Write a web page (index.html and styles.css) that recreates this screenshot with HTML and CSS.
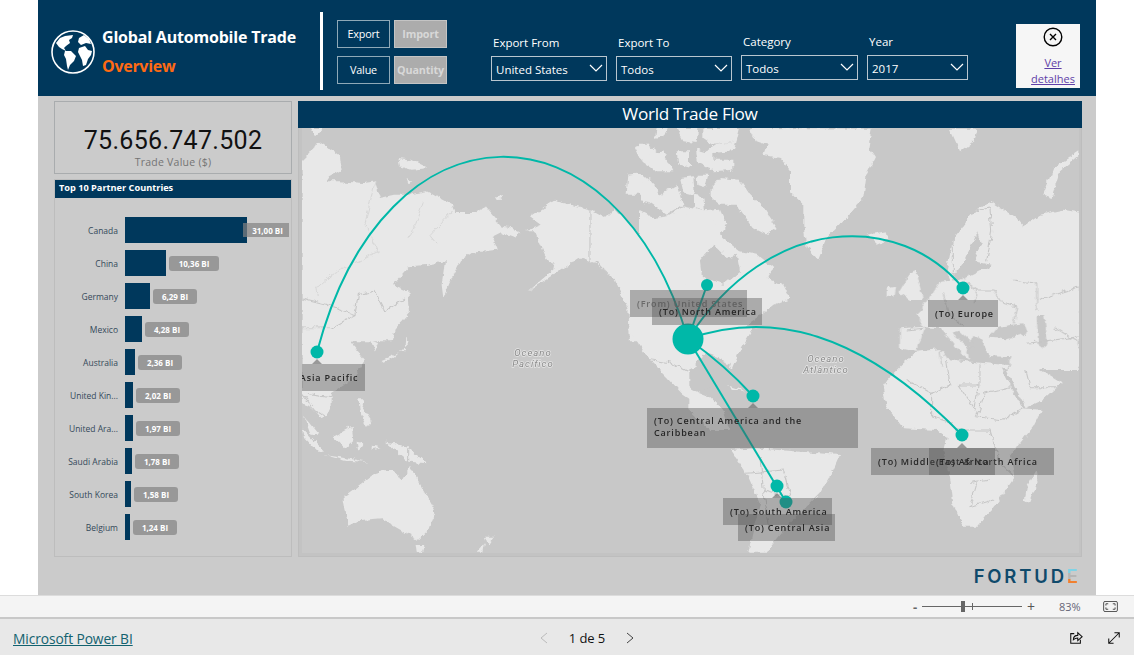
FILE: index.html
```html
<!DOCTYPE html>
<html lang="en">
<head>
<meta charset="utf-8">
<title>Global Automobile Trade</title>
<link rel="stylesheet" href="styles.css">
</head>
<body>
<main class="stage">
  <div class="report">
    <header class="header">
      <div class="brand">
        <svg class="globe" viewBox="0 0 44 44">
          <circle cx="22" cy="22" r="21" class="globe-ring"/>
          <path class="globe-land" d="M5 13 L9 8 L14 6 L22 5 L21 8 L18 10 L19 13 L15 16 L13 18 L15 21 L11 19 L8 17 Z"/>
          <path class="globe-land" d="M14 21 L20 21 L25 26 L23 31 L19 35 L17 40 L16 36 L15 29 L13 25 Z"/>
          <path class="globe-land" d="M28 8 L33 5 L38 9 L40 14 L35 13 L30 15 L27 12 Z"/>
          <path class="globe-land" d="M28 18 L34 16 L37 20 L41 21 L40 25 L37 29 L35 35 L32 36 L31 30 L29 26 L27 22 Z"/>
        </svg>
        <div class="titles">
          <div class="title">Global Automobile Trade</div>
          <div class="subtitle">Overview</div>
        </div>
      </div>
      <div class="divider"></div>
      <div class="toggles">
        <button class="toggle">Export</button>
        <button class="toggle off">Import</button>
        <button class="toggle">Value</button>
        <button class="toggle off">Quantity</button>
      </div>
      <div class="slicers">
        <div class="slicer"><div class="slicer-label">Export From</div><div class="dropdown"><span>United States</span><svg class="chev" viewBox="0 0 14 8"><path d="M1 1 L7 7 L13 1"/></svg></div></div>
        <div class="slicer"><div class="slicer-label">Export To</div><div class="dropdown"><span>Todos</span><svg class="chev" viewBox="0 0 14 8"><path d="M1 1 L7 7 L13 1"/></svg></div></div>
        <div class="slicer up"><div class="slicer-label">Category</div><div class="dropdown"><span>Todos</span><svg class="chev" viewBox="0 0 14 8"><path d="M1 1 L7 7 L13 1"/></svg></div></div>
        <div class="slicer up"><div class="slicer-label">Year</div><div class="dropdown"><span>2017</span><svg class="chev" viewBox="0 0 14 8"><path d="M1 1 L7 7 L13 1"/></svg></div></div>
      </div>
      <div class="details">
        <svg class="close" viewBox="0 0 20 20"><circle cx="10" cy="10" r="8.8"/><path d="M7 7 L13 13 M13 7 L7 13"/></svg>
        <a class="details-link" href="#">Ver<br>detalhes</a>
      </div>
    </header>

    <div class="content">
      <aside class="left">
        <section class="kpi">
          <div class="kpi-value">75.656.747.502</div>
          <div class="kpi-label">Trade Value ($)</div>
        </section>
        <section class="partners">
          <h2 class="partners-title">Top 10 Partner Countries</h2>
          <div class="rows">
            <div class="row"><span class="country">Canada</span><span class="bar" style="width:122px"></span><span class="val over">31,00 BI</span></div>
            <div class="row"><span class="country">China</span><span class="bar" style="width:41px"></span><span class="val wide">10,36 BI</span></div>
            <div class="row"><span class="country">Germany</span><span class="bar" style="width:25px"></span><span class="val">6,29 BI</span></div>
            <div class="row"><span class="country">Mexico</span><span class="bar" style="width:17px"></span><span class="val">4,28 BI</span></div>
            <div class="row"><span class="country">Australia</span><span class="bar" style="width:10px"></span><span class="val">2,36 BI</span></div>
            <div class="row"><span class="country">United Kin...</span><span class="bar" style="width:8px"></span><span class="val">2,02 BI</span></div>
            <div class="row"><span class="country">United Ara...</span><span class="bar" style="width:8px"></span><span class="val">1,97 BI</span></div>
            <div class="row"><span class="country">Saudi Arabia</span><span class="bar" style="width:7px"></span><span class="val">1,78 BI</span></div>
            <div class="row"><span class="country">South Korea</span><span class="bar" style="width:6px"></span><span class="val">1,58 BI</span></div>
            <div class="row"><span class="country">Belgium</span><span class="bar" style="width:5px"></span><span class="val">1,24 BI</span></div>
          </div>
        </section>
      </aside>

      <section class="flow">
        <h2 class="flow-title">World Trade Flow</h2>
        <div class="map-frame">
          <div class="map">
            <svg class="map-svg" viewBox="302 128 777 425">
              <defs>
                <filter id="rough" x="0" y="0" width="100%" height="100%" color-interpolation-filters="sRGB">
                  <feTurbulence type="fractalNoise" baseFrequency="0.14" numOctaves="3" seed="4" result="n"/>
                  <feDisplacementMap in="SourceGraphic" in2="n" scale="6" xChannelSelector="R" yChannelSelector="G"/>
                </filter>
              </defs>
              <g filter="url(#rough)">
              <g transform="translate(295 98) scale(.3333)">
                <path class="land" d="M20,190 L45,165 L70,130 L100,150 L135,175 L140,215 L105,235 L95,250 L130,250 L205,255 L240,250 L255,300 L300,290 L340,290 L395,280 L470,320 L480,345 L540,345 L570,325 L620,385 L665,395 L675,400 L660,420 L620,405 L590,420 L605,455 L530,465 L495,490 L470,540 L445,600 L440,560 L450,490 L400,500 L345,505 L295,560 L340,580 L345,640 L300,690 L290,730 L20,730 Z"/>
                <path class="land" d="M45,90 L85,90 L60,115 Z M310,180 L350,185 L400,210 L350,215 L315,205 Z M335,240 L352,250 L340,255 Z M600,298 L625,295 L622,305 L605,306 Z"/>
                <path class="land" d="M705,355 L780,305 L885,335 L930,360 L960,330 L1020,395 L1090,435 L1200,430 L1200,730 L1005,730 L1000,630 L960,550 L910,500 L850,480 L790,520 L700,580 L780,510 L750,470 L720,400 L695,400 L740,380 Z"/>
                <path class="land" d="M1000,230 L1040,225 L1080,260 L1040,290 L995,290 Z M1020,150 L1060,140 L1120,185 L1080,215 L1040,190 Z"/>
                <path class="border" d="M885,335 L885,490 L910,495 L960,550"/>
                <path class="border" d="M20,600 L100,620 L180,650 L190,590 L240,580 L270,640 L330,600"/>
                <path class="border" d="M20,690 L110,690 L180,650"/>
                <path class="thin" d="M240,250 L210,380 L250,460 L190,490 L110,530 L65,570 L70,600 M385,310 L345,420 M470,340 L405,410 L430,440"/>
              </g>
              <g transform="translate(640 128) scale(.3333)">
                <path class="land" d="M50,0 L80,0 L70,25 L45,30 Z M110,0 L175,0 L170,45 L130,40 Z M190,0 L300,0 L290,40 L220,50 L190,30 Z"/>
                <path class="land" d="M0,50 L30,50 L20,90 L0,90 Z M20,80 L70,70 L100,130 L40,130 Z M110,70 L150,70 L150,120 L115,110 Z"/>
                <path class="land" d="M165,60 L200,70 L230,50 L290,40 L280,70 L220,75 L220,95 L280,95 L280,125 L220,130 L190,110 L170,100 Z"/>
                <path class="land" d="M215,180 L240,150 L300,155 L330,200 L370,240 L410,300 L380,320 L340,300 L290,230 L240,230 L215,210 Z"/>
                <path class="land" d="M120,150 L160,145 L165,205 L130,195 Z M170,140 L205,140 L195,178 L172,170 Z M165,200 L190,205 L195,250 L165,240 Z"/>
                <path class="land" d="M0,175 L30,150 L60,200 L110,170 L130,230 L80,260 L30,225 L0,220 Z"/>
                <path class="land" d="M0,250 L40,270 L80,265 L130,235 L195,250 L240,245 L260,290 L235,330 L240,360 L0,360 Z"/>
              </g>
              <g transform="translate(690 98) scale(.3333)">
                <path class="land" d="M180,90 L545,92 L535,150 L555,180 L530,230 L520,300 L470,360 L410,420 L385,485 L350,450 L340,380 L340,320 L300,280 L300,220 L270,180 L220,170 L230,140 L200,130 Z"/>
                <path class="land" d="M530,410 L590,400 L595,425 L560,440 Z"/>
                <path class="land" d="M-10,340 L60,350 L100,420 L150,460 L200,470 L250,510 L230,540 L280,560 L300,600 L250,620 L215,650 L170,680 L130,730 L-10,730 Z"/>
                <path class="sea" d="M30,490 L70,440 L110,480 L140,470 L150,520 L100,560 L60,550 L35,530 Z"/>
                <path class="land" d="M780,92 L860,92 L850,130 L810,160 Z"/>
                <path class="land" d="M1060,290 L1090,210 L1165,160 L1165,175 L1110,220 L1085,300 Z"/>
                <path class="land" d="M770,520 L790,420 L850,340 L900,310 L980,360 L1000,385 L1050,350 L1120,335 L1175,345 L1175,560 L880,560 L790,570 Z"/>
                <path class="sea" d="M825,485 L862,400 L872,440 L850,490 L905,500 L880,530 L830,545 L790,565 L790,530 Z"/>
                <path class="border" d="M790,530 L790,420 L850,340 L900,330 M900,330 L905,400 L890,490"/>
              </g>
              <g transform="translate(295 330) scale(.3333)">
                <path class="land" d="M1000,-5 L1060,85 L1120,145 L1160,190 L1205,220 L1205,-5 Z"/>
                <path class="land" d="M20,-5 L235,-5 L170,40 L210,90 L170,150 L110,190 L110,240 L80,265 L50,230 L20,220 Z"/>
                <path class="land" d="M30,260 L70,310 L50,315 Z M20,295 L90,365 L70,365 L20,310 Z M115,320 L170,290 L175,330 L150,355 Z M90,375 L220,395 L150,392 Z M230,350 L260,355 L230,360 Z M185,335 L205,340 L190,365 Z"/>
                <path class="land" d="M225,30 L250,40 L240,65 Z M260,90 L330,60 L335,20 L342,40 L300,80 L265,95 Z"/>
                <path class="land" d="M190,205 L205,205 L200,225 L230,270 L215,290 L195,250 Z"/>
                <path class="land" d="M270,335 L330,345 L395,400 L340,395 L300,360 Z"/>
                <path class="land" d="M145,500 L200,460 L240,430 L270,420 L300,420 L320,455 L345,410 L380,470 L420,540 L400,600 L370,630 L300,590 L260,565 L200,570 L160,590 Z"/>
                <path class="land" d="M365,645 L388,645 L380,668 L368,668 Z M570,620 L600,620 L580,650 Z M545,668 L570,640 L565,668 Z"/>
                <path class="border" d="M20,190 L60,240 L90,260 M1060,88 L1130,100 L1190,130 M30,190 L110,200 M338,355 L338,395"/>
              </g>
              <g transform="translate(690 330) scale(.3333)">
                <path class="land" d="M-5,-5 L190,-5 L150,60 L125,120 L105,90 L50,70 L-5,110 Z"/>
                <path class="sea" d="M-5,115 L50,100 L90,135 L60,170 L15,190 L-5,170 Z"/>
                <path class="land" d="M-5,175 L60,200 L100,240 L120,300 L60,300 L-5,240 Z M110,165 L170,185 L130,178 Z"/>
                <path class="land" d="M120,360 L200,355 L450,375 L430,420 L390,490 L320,560 L280,600 L240,650 L230,668 L175,668 L190,600 L210,520 L170,430 Z"/>
                <path class="land" d="M578,175 L600,140 L640,100 L690,60 L760,55 L770,85 L870,95 L930,110 L960,170 L1000,235 L1055,240 L1030,290 L990,340 L960,380 L975,440 L920,520 L860,590 L820,590 L790,520 L780,440 L760,360 L770,320 L740,300 L640,295 L590,230 Z"/>
                <path class="land" d="M945,110 L1000,90 L1115,160 L1060,210 L1010,232 L975,170 Z"/>
                <path class="land" d="M1010,470 L1040,420 L1045,450 L1020,520 L1005,510 Z"/>
                <path class="border" d="M770,90 L780,165 L725,190 L650,150 M870,95 L870,165 L805,165 L855,240 L865,160 M960,170 L880,190 L860,260 L940,270 L1000,235 M725,190 L725,260 L790,280 M790,300 L900,300 L930,400 L970,440 M840,460 L900,450 M860,460 L840,530 L910,510 M1000,90 L1020,170 L1100,170 M170,430 L280,420 L300,500 L220,480 L210,380 M220,480 L240,600"/>
              </g>
              <g transform="translate(880 250) scale(.3333)">
                <path class="land" d="M180,95 L240,90 L300,60 L600,60 L600,360 L385,360 L110,305 L60,295 L60,235 L130,230 L110,190 L130,170 Z"/>
                <path class="land" d="M55,130 L90,70 L105,60 L130,150 L90,150 Z M20,115 L45,110 L40,140 L20,145 Z"/>
                <path class="sea" d="M110,305 L180,297 L205,328 L300,338 L385,345 L395,322 L330,318 L305,270 L285,255 L262,300 L268,330 L240,305 L205,262 L180,235 L135,232 L122,270 Z"/>
                <path class="sea" d="M215,250 L240,245 L290,290 L270,295 Z"/>
                <path class="sea" d="M355,230 L430,220 L440,250 L380,265 L330,260 Z"/>
                <path class="sea" d="M470,200 L495,195 L505,270 L495,295 L475,280 Z"/>
                <path class="border" d="M80,240 L130,235 M190,130 L210,200 L250,225 M250,90 L290,120 L340,120 M340,120 L365,160 L410,170 L400,220 M290,120 L280,160 M400,90 L470,100 L470,180 M470,150 L600,110 M520,230 L600,280 M440,280 L600,260 M180,300 L185,350 M390,340 L380,360"/>
              </g>
              </g>
              <text class="ocean" x="533" y="356">Oceano</text>
              <text class="ocean" x="533" y="367">Pacífico</text>
              <text class="ocean" x="826" y="362">Oceano</text>
              <text class="ocean" x="826" y="373">Atlântico</text>

              <path class="arc" d="M688,339 C615,94 385,94 317,352"/>
              <path class="arc" d="M688,339 C770,212 900,212 963,288"/>
              <path class="arc" d="M688,339 C770,310 860,330 962,435"/>
              <path class="arc" d="M688,339 Q725,365 753,396"/>
              <path class="arc" d="M688,339 L786,502"/>
              <path class="arc" d="M688,339 L707,285"/>
              <circle class="dot" cx="688" cy="339" r="15.5"/>
              <circle class="dot" cx="707" cy="285" r="6"/>
              <circle class="dot" cx="963" cy="288" r="6.5"/>
              <circle class="dot" cx="317" cy="352" r="6.5"/>
              <circle class="dot" cx="753" cy="396" r="6.5"/>
              <circle class="dot" cx="962" cy="435" r="6.5"/>
              <circle class="dot" cx="786" cy="502" r="6.5"/>
              <circle class="dot" cx="777" cy="486" r="6.5"/>
              <path class="tip" d="M958,300 L963,295 L968,300 Z M312,364 L317,359 L322,364 Z M748,408 L753,403 L758,408 Z M957,448 L962,443 L967,448 Z M772,498 L777,493 L782,498 Z"/>
            </svg>
            <div class="tag tag-from">(From) United States</div>
            <div class="tag tag-na">(To) North America</div>
            <div class="tag tag-eu">(To) Europe</div>
            <div class="tag tag-ap">(To) Asia Pacific</div>
            <div class="tag tag-ca">(To) Central America and the Caribbean</div>
            <div class="tag tag-me">(To) Middle East &amp; North Africa</div>
            <div class="tag tag-af">(To) Africa</div>
            <div class="tag tag-sa">(To) South America</div>
            <div class="tag tag-cas">(To) Central Asia</div>
          </div>
        </div>
      </section>
    </div>

    <div class="logo-row"><div class="logo">FORTUD<span class="logo-e">E</span></div></div>
  </div>
</main>

<div class="zoombar">
  <span class="zoom-minus">-</span>
  <div class="slider"><span class="tick"></span><span class="thumb"></span></div>
  <span class="zoom-plus">+</span>
  <span class="zoom-val">83%</span>
  <svg class="fit" viewBox="0 0 16 12"><rect x="0.5" y="0.5" width="15" height="11" rx="1.5"/><path d="M3 5 V3 H5.5 M13 5 V3 H10.5 M3 7 V9 H5.5 M13 7 V9 H10.5"/></svg>
</div>

<footer class="footer">
  <a class="pbi" href="#">Microsoft Power BI</a>
  <nav class="pager">
    <svg class="pg dim" viewBox="0 0 8 12"><path d="M7 1 L1 6 L7 11"/></svg>
    <span class="pg-text">1 de 5</span>
    <svg class="pg" viewBox="0 0 8 12"><path d="M1 1 L7 6 L1 11"/></svg>
  </nav>
  <div class="actions">
    <svg class="act" viewBox="0 0 16 16"><path d="M6 3 H2 V14 H13 V10"/><path d="M5 10 C5 7 7 5 10 5 V2 L15 6.5 L10 11 V8 C8 8 6.5 8.5 5 10 Z"/></svg>
    <svg class="act" viewBox="0 0 16 16"><path d="M2 14 L14 2 M8.5 2 H14 V7.5 M2 8.5 V14 H7.5"/></svg>
  </div>
</footer>
</body>
</html>
```
FILE: styles.css
```css
* { box-sizing: border-box; }
html, body { margin: 0; height: 100%; }
body {
  width: 1134px;
  height: 655px;
  overflow: hidden;
  background: #fff;
  font-family: "Open Sans", "Liberation Sans", sans-serif;
  display: flex;
  flex-direction: column;
}
.stage { height: 595px; padding-left: 38px; flex: none; }
.report { width: 1058px; height: 595px; background: #cbcbcb; display: flex; flex-direction: column; }

/* header */
.header { height: 96px; flex: none; background: #00385c; display: flex; align-items: flex-start; }
.brand { width: 282px; padding-left: 13px; padding-top: 30px; display: flex; gap: 7px; flex: none; }
.globe { width: 44px; height: 44px; flex: none; }
.globe-ring { fill: none; stroke: #fff; stroke-width: 1.6; }
.globe-land { fill: #fff; }
.titles { display: flex; flex-direction: column; margin-top: -5px; }
.title { color: #fff; font-size: 16px; font-weight: 700; line-height: 24px; letter-spacing: -.2px; white-space: nowrap; }
.subtitle { color: #ff6a13; font-size: 16px; font-weight: 700; line-height: 34px; letter-spacing: -.3px; }
.divider { width: 3px; height: 78px; margin-top: 12px; background: #fff; flex: none; }
.toggles { margin: 20px 0 0 14px; display: grid; grid-template-columns: 53px 53px; grid-template-rows: 28px 28px; column-gap: 4px; row-gap: 8px; flex: none; }
.toggle { padding: 0 0 2px; border: 1px solid #8fa9b8; background: #00385c; color: #fff; font: 500 10.8px "Open Sans", sans-serif; letter-spacing: -.15px; }
.toggle.off { background: #acacac; color: #d8d8d8; border-color: #c4c4c4; font-weight: 700; }
.slicers { margin: 34px 0 0 44px; display: grid; grid-template-columns: 116px 116px 117px 101px; column-gap: 9px; flex: none; }
.slicer-label { height: 22px; padding-left: 2px; color: #fff; font-size: 11.5px; line-height: 17px; white-space: nowrap; }
.slicer.up { margin-top: -1px; }
.dropdown { height: 25px; border: 1px solid #b9c6cf; display: flex; align-items: center; justify-content: space-between; padding: 2px 3px 0 4px; color: #fff; font-size: 11.5px; white-space: nowrap; }
.chev { width: 14px; height: 8px; fill: none; stroke: #fff; stroke-width: 1.2; margin-top: -3px; }
.details { margin: 24px 16px 0 auto; width: 64px; height: 64px; background: #f6f6f6; display: flex; flex-direction: column; align-items: center; padding: 3px 0 0 10px; }
.close { width: 20px; height: 20px; fill: none; stroke: #000; stroke-width: 1.4; }
.details-link { margin-top: 8px; color: #5f3fa8; font-size: 11px; line-height: 16px; text-align: center; }

/* body */
.content { height: 461px; flex: none; padding: 5px 14px 0 16px; display: flex; gap: 6px; }
.left { width: 238px; display: flex; flex-direction: column; gap: 5px; flex: none; }
.kpi { height: 73px; border: 1px solid #a9acae; text-align: center; padding-top: 24px; flex: none; }
.kpi-value { font-family: "Roboto", sans-serif; font-size: 25px; line-height: 30px; letter-spacing: .3px; color: #111; }
.kpi-label { font-size: 10.5px; line-height: 14px; color: #747474; letter-spacing: .25px; margin-top: -1px; }
.partners { height: 378px; border: 1px solid #bdbdbd; flex: none; }
.partners-title { margin: 0; height: 18px; background: #00385c; color: #fff; font-size: 9.2px; font-weight: 700; line-height: 16px; padding-left: 4px; }
.rows { padding-top: 19px; display: flex; flex-direction: column; gap: 7px; }
.row { height: 26px; display: flex; align-items: center; }
.country { width: 63px; margin-right: 7px; text-align: right; color: #34495a; font-size: 8.5px; white-space: nowrap; flex: none; }
.bar { height: 26px; background: #00385c; flex: none; }
.val { margin-left: 3px; width: 44px; height: 15px; border-radius: 3px; background: #989898; color: #fff; font-size: 8px; font-weight: 700; line-height: 15px; text-align: center; white-space: nowrap; flex: none; }
.val.wide { width: 50px; }
.val.over { margin-left: -4px; width: 46px; height: 14px; background: rgba(130,130,130,.7); border-radius: 0; padding-left: 3px; }

.flow { width: 784px; height: 456px; display: flex; flex-direction: column; flex: none; }
.flow-title { margin: 0; height: 27px; background: #00385c; color: #fff; font-size: 17.2px; font-weight: 400; line-height: 25px; text-align: center; letter-spacing: -.3px; flex: none; }
.map-frame { height: 429px; padding: 0 3px 2px 4px; border: 1px solid #bdbdbd; border-top: 0; background: #c3c3c3; flex: none; }
.map { position: relative; width: 777px; height: 425px; overflow: hidden; background: #c8c8c8; margin-left: -1px; }
.map-svg { display: block; width: 777px; height: 425px; }
.land { fill: #e8e8e8; }
.sea { fill: #c8c8c8; }
.border { fill: none; stroke: #c6c6c6; stroke-width: 3.2; stroke-linejoin: round; }
.thin { fill: none; stroke: #cfcfcf; stroke-width: 2; stroke-linejoin: round; }
.ocean { font: italic 9.5px "Roboto", sans-serif; letter-spacing: 1px; fill: #8a8a8a; stroke: #e6e6e6; stroke-width: 1.5px; paint-order: stroke; text-anchor: middle; }
.arc { fill: none; stroke: #00b8a8; stroke-width: 2; }
.dot { fill: #00b8a8; }
.tip { fill: rgba(100,100,100,.6); }

.tag { position: absolute; height: 27px; padding: 0 7px; background: rgba(80,80,80,.4); color: #262626; font-size: 9px; font-weight: 600; line-height: 27px; letter-spacing: .85px; white-space: nowrap; }
.tag-from { left: 328px; top: 162px; width: 117px; color: #6b6b6b; }
.tag-na { left: 350px; top: 170px; width: 110px; }
.tag-eu { left: 626px; top: 172px; width: 70px; }
.tag-ap { left: -32px; top: 236px; width: 95px; }
.tag-ca { left: 345px; top: 280px; width: 211px; height: 40px; line-height: 12px; padding-top: 7px; white-space: normal; }
.tag-me { left: 569px; top: 320px; width: 183px; }
.tag-af { left: 627px; top: 320px; width: 66px; }
.tag-sa { left: 421px; top: 370px; width: 109px; }
.tag-cas { left: 436px; top: 386px; width: 97px; }

/* logo */
.logo-row { flex: 1; display: flex; justify-content: flex-end; padding: 10px 18px 0 0; }
.logo { height: 18px; color: #0f4a6b; font-size: 18.5px; font-weight: 600; letter-spacing: 2.8px; line-height: 18px; font-family: "Inter", sans-serif; }
.logo-e { background: linear-gradient(#7fd3e6 0 36%, #b5b5b5 36% 62%, #f08030 62%); -webkit-background-clip: text; background-clip: text; color: transparent; letter-spacing: 0; }

/* bars */
.zoombar { height: 24px; flex: none; background: #f4f4f4; border-top: 1px solid #dcdcdc; border-bottom: 2px solid #c8c8c8; display: flex; align-items: center; color: #666; }
.zoom-minus { margin-left: 913px; width: 9px; font-size: 13px; font-weight: 700; line-height: 14px; }
.slider { position: relative; width: 100px; height: 1px; background: #666; flex: none; }
.tick { position: absolute; left: 50px; top: -3px; width: 1px; height: 7px; background: #666; }
.thumb { position: absolute; left: 39px; top: -5px; width: 4px; height: 11px; background: #666; }
.zoom-plus { margin-left: 5px; width: 14px; font-size: 14px; line-height: 14px; color: #555; }
.zoom-val { margin-left: 18px; font-size: 11px; color: #667; }
.fit { margin-left: 22px; width: 15px; height: 11px; fill: none; stroke: #444; stroke-width: 1; }
.footer { flex: 1; background: #e8e8e8; display: flex; align-items: center; padding-top: 2px; }
.pbi { margin-left: 13px; color: #12626f; font-size: 13.8px; letter-spacing: -.1px; width: 527px; flex: none; }
.pager { display: flex; align-items: center; width: 95px; flex: none; }
.pg { width: 8px; height: 12px; fill: none; stroke: #444; stroke-width: 1; flex: none; }
.pg.dim { stroke: #bbb; }
.pg-text { width: 78px; text-align: center; font-size: 13px; color: #111; font-weight: 500; letter-spacing: -.1px; }
.actions { margin-left: auto; margin-right: 13px; display: flex; gap: 24px; }
.act { width: 14px; height: 14px; fill: none; stroke: #111; stroke-width: 1.2; }
```
